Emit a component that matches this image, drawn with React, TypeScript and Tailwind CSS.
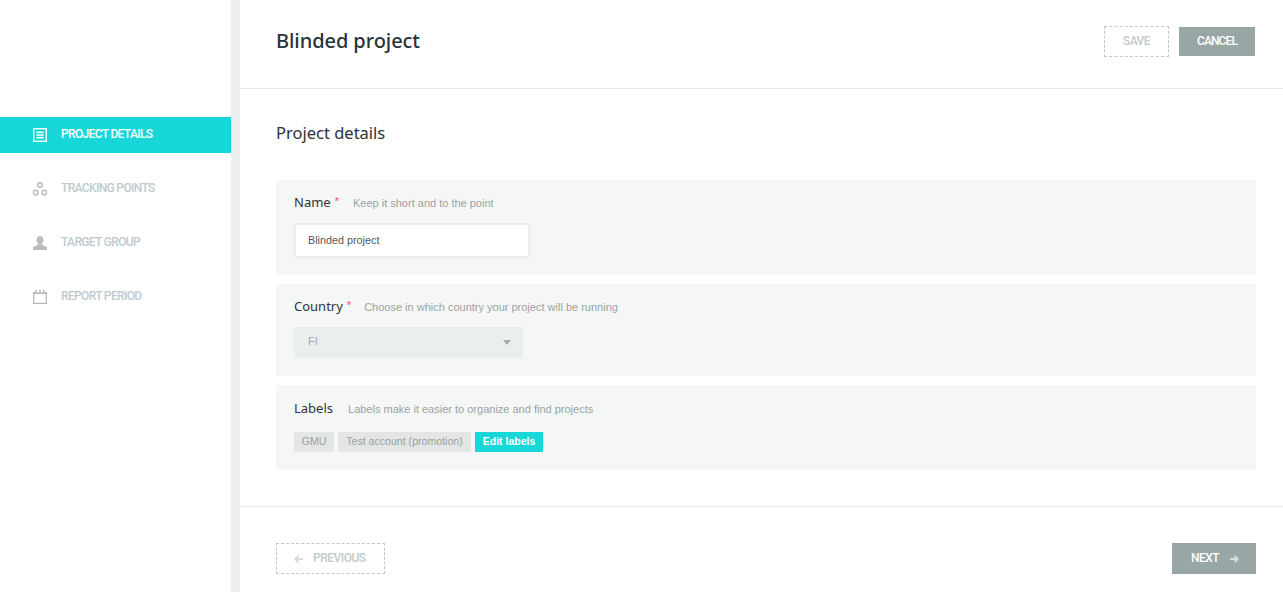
const head = { fontFamily: '"Noto Sans", sans-serif' };
const caps = { fontFamily: 'Roboto, sans-serif' };
const body = { fontFamily: '"Liberation Sans", Arial, sans-serif' };

function DetailsIcon() {
  return (
    <svg width="14" height="14" viewBox="0 0 14 14" fill="none">
      <rect x="0" y="0" width="14" height="14" fill="#ffffff" />
      <rect x="1" y="1" width="0.6" height="12" fill="#17d7d8" />
      <rect x="2" y="1.4" width="10.6" height="11.2" fill="#17d7d8" />
      <rect x="3.5" y="3.5" width="7" height="1.6" fill="#ffffff" />
      <rect x="3.5" y="6.2" width="7" height="1.6" fill="#ffffff" />
      <rect x="3.5" y="8.9" width="7" height="1.6" fill="#ffffff" />
    </svg>
  );
}
function PointsIcon() {
  return (
    <svg width="14" height="14" viewBox="0 0 14 14" fill="none" stroke="#b4baba" strokeWidth="1.5">
      <circle cx="7" cy="3" r="2.3" />
      <circle cx="2.7" cy="10.6" r="2.3" />
      <circle cx="11.3" cy="10.6" r="2.3" />
    </svg>
  );
}
function UserIcon() {
  return (
    <svg width="14" height="14" viewBox="0 0 14 14" fill="#b9bfbf">
      <ellipse cx="7" cy="4" rx="3.4" ry="4" />
      <path d="M5 7.5h4l.4 1.6L14 11v3H0v-3l4.6-1.9z" />
    </svg>
  );
}
function CalIcon() {
  return (
    <svg width="14" height="14" viewBox="0 0 14 14" fill="none">
      <rect x="0.6" y="2.6" width="12.8" height="10.8" stroke="#b4baba" strokeWidth="1.2" />
      <rect x="0" y="2" width="14" height="2" fill="#b4baba" />
      <rect x="2.5" y="0" width="1.5" height="2.6" fill="#b4baba" />
      <rect x="6.2" y="0" width="1.5" height="2.6" fill="#b4baba" />
      <rect x="10" y="0" width="1.5" height="2.6" fill="#b4baba" />
      <rect x="4.4" y="2" width="1.4" height="1" fill="#ffffff" />
      <rect x="8.2" y="2" width="1.4" height="1" fill="#ffffff" />
    </svg>
  );
}
function Arrow({ left, color }: { left?: boolean; color: string }) {
  return (
    <svg width="9" height="8" viewBox="0 0 9 8" fill="none" className={left ? "rotate-180" : ""}>
      <path d="M0 4h7.5M4.5 0.8l3.2 3.2-3.2 3.2" stroke={color} strokeWidth="2" />
    </svg>
  );
}

function NavItem({ icon, label, active }: { icon: React.ReactNode; label: string; active?: boolean }) {
  return (
    <div className={`flex h-9 items-center pl-[33px] ${active ? "bg-[#17d7d8] text-white" : "text-[#bfcacd]"}`}>
      <span className="flex w-[28px]">{icon}</span>
      <span className="relative -top-[1px] text-[12px] font-medium tracking-[-0.65px]" style={caps}>{label}</span>
    </div>
  );
}

function Field({ title, req, hint, hintCls, cls, children }: { title: string; req?: boolean; hint: string; hintCls: string; cls: string; children: React.ReactNode }) {
  return (
    <div className={`bg-[#f5f7f6] px-[18px] ${cls}`}>
      <div className="flex h-[16px] items-center">
        <span className="text-[13px] text-[#2a3539]" style={head}>{title}</span>
        {req && <span className="relative -top-[2px] ml-[4px] text-[11px] text-[#f0505a]" style={body}>*</span>}
        <span className={`text-[11px] text-[#99a3a3] ${hintCls}`} style={body}>{hint}</span>
      </div>
      {children}
    </div>
  );
}

export default function App() {
  return (
    <div className="flex h-[592px] w-[1283px] overflow-hidden bg-white">
      <aside className="flex h-full w-[240px] shrink-0 flex-col gap-[18px] border-r-[9px] border-[#ecf0f0] pt-[117px]">
        <NavItem active icon={<DetailsIcon />} label="PROJECT DETAILS" />
        <NavItem icon={<PointsIcon />} label="TRACKING POINTS" />
        <NavItem icon={<UserIcon />} label="TARGET GROUP" />
        <NavItem icon={<CalIcon />} label="REPORT PERIOD" />
      </aside>
      <main className="flex min-w-0 flex-1 flex-col">
        <header className="flex h-[89px] shrink-0 items-center justify-between border-b border-[#e6eaea] pl-[36px] pr-[28px]">
          <h1 className="relative -top-[3px] text-[20px] font-medium tracking-[-0.07px] text-[#28333a]" style={head}>Blinded project</h1>
          <div className="relative -top-[3px] flex items-center gap-[10px]">
            <button className="flex h-[31px] w-[65px] items-center justify-center border border-dashed border-[#bccaca] text-[12px] font-medium tracking-[-0.5px] text-[#bfcacd]" style={caps}>SAVE</button>
            <button className="flex h-[29px] w-[76px] items-center justify-center bg-[#98a6a5] text-[12px] font-medium tracking-[-0.9px] text-white" style={caps}>CANCEL</button>
          </div>
        </header>
        <section className="flex flex-col px-[36px] pr-[27px]">
          <h2 className="mt-[32px] h-[27px] text-[16.5px] leading-[24px] text-[#28333a]" style={head}>Project details</h2>
          <div className="mt-[32px] flex flex-col gap-[9px]">
            <Field title="Name" req hint="Keep it short and to the point" hintCls="ml-[14px]" cls="h-[95px] pt-[15px]">
              <div className="mt-[12px] flex h-[35px] w-[236px] items-center border-2 border-[#ebeeee] bg-white pl-[12px] text-[10.8px] text-[#55585a]" style={body}>Blinded project</div>
            </Field>
            <Field title="Country" req hint="Choose in which country your project will be running" hintCls="ml-[13px]" cls="h-[92px] pt-[15px]">
              <div className="mt-[12px] flex h-[31px] w-[229px] items-center justify-between bg-[#ebeeee] pl-[14px] pr-[12px] text-[11px] text-[#a2a9a9]" style={body}>
                <span className="relative -top-[1px]">FI</span>
                <svg width="8" height="5" viewBox="0 0 8 5"><path d="M0 0h8L4 5z" fill="#a5acac" /></svg>
              </div>
            </Field>
            <Field title="Labels" hint="Labels make it easier to organize and find projects" hintCls="ml-[15px]" cls="h-[85px] pt-[16px]">
              <div className="mt-[15px] flex gap-[4px] text-[10.6px]" style={body}>
                <span className="flex h-[20px] w-[40px] items-center justify-center bg-[#e4e6e5] pb-[1px] text-[#999f9f]">GMU</span>
                <span className="flex h-[20px] w-[133px] items-center justify-center bg-[#e4e6e5] pb-[1px] text-[#999f9f]">Test account (promotion)</span>
                <span className="flex h-[20px] w-[68px] items-center justify-center bg-[#17d7d8] pb-[1px] text-[10.5px] font-bold text-white">Edit labels</span>
              </div>
            </Field>
          </div>
        </section>
        <footer className="mt-[36px] flex flex-1 items-start justify-between border-t border-[#e6eaea] pl-[36px] pr-[27px] pt-[36px]">
          <button className="flex h-[31px] w-[109px] items-center border border-dashed border-[#bccaca] pl-[17px] text-[12px] font-medium tracking-[-0.5px] text-[#bfcacd]" style={caps}>
            <Arrow left color="#d5dcdc" />
            <span className="relative -top-[1px] ml-[10px]">PREVIOUS</span>
          </button>
          <button className="flex h-[31px] w-[84px] items-center bg-[#98a6a5] pl-[19px] text-[12px] font-medium tracking-[-0.5px] text-white" style={caps}>
            <span className="relative -top-[1px]">NEXT</span>
            <span className="ml-[11px]"><Arrow color="#d5dcdc" /></span>
          </button>
        </footer>
      </main>
    </div>
  );
}
